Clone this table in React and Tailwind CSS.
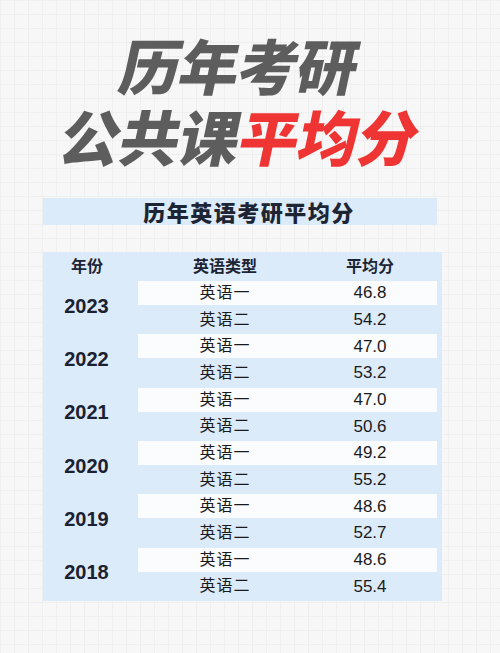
import React from 'react';

const rows = [
    { year: '2023', one: '46.8', two: '54.2' },
    { year: '2022', one: '47.0', two: '53.2' },
    { year: '2021', one: '47.0', two: '50.6' },
    { year: '2020', one: '49.2', two: '55.2' },
    { year: '2019', one: '48.6', two: '52.7' },
    { year: '2018', one: '48.6', two: '55.4' },
];

const cjk = { fontFamily: '"Liberation Sans", "Noto Sans CJK SC", sans-serif' };

const App = () => {
    return (
        <div
            className="w-[500px] h-[653px] overflow-hidden bg-[#f7f7f7] bg-[linear-gradient(#efefef_1px,transparent_1px),linear-gradient(90deg,#efefef_1px,transparent_1px)] bg-[size:14px_14px]"
            style={cjk}
        >
            {/* big title */}
            <div className="pt-[34px] pr-[20px] flex flex-col items-center font-black text-[60px] leading-[60px] text-[#5d5d5d]" style={{ fontFamily: '"Noto Sans CJK SC", sans-serif' }}>
                <div className="-skew-x-12 tracking-[-1px]">历年考研</div>
                <div className="-skew-x-12 tracking-[-0.5px] mt-[11px]">
                    公共课<span className="text-[#ef3434]">平均分</span>
                </div>
            </div>

            <div className="px-[43px]">
                {/* subtitle band */}
                <div className="mt-[33px] w-[394px] h-[27px] bg-[#dcebfa] flex items-center justify-center pl-[18px]">
                    <span className="text-[22px] leading-[27px] font-black tracking-[1.5px] text-[#1d2433]" style={{ fontFamily: '"Noto Sans CJK SC", sans-serif' }}>历年英语考研平均分</span>
                </div>

                {/* table */}
                <div className="mt-[27px] w-[399px] bg-[#dcebfa] text-[#1a1a1a]">
                    <div className="flex h-[29px] items-center font-bold text-[16px] text-[#1d2433]">
                        <div className="w-[88px] text-center">年份</div>
                        <div className="w-[188px] text-center">英语类型</div>
                        <div className="w-[102px] text-center">平均分</div>
                    </div>

                    {rows.map((r) => (
                        <div key={r.year} className="flex h-[53.33px]">
                            <div className="w-[95px] flex items-center justify-center pr-[8px] pb-[4px] font-bold text-[20px] text-[#1b2130]">
                                {r.year}
                            </div>
                            <div className="flex flex-col w-[299px]">
                                <div className="h-[24px] bg-[#fbfcfd] flex items-center text-[16px]">
                                    <div className="w-[174px] text-center tracking-[1px]">英语一</div>
                                    <div className="w-[116px] text-center text-[17px]">{r.one}</div>
                                </div>
                                <div className="flex-1 flex items-center text-[16px]">
                                    <div className="w-[174px] text-center tracking-[1px]">英语二</div>
                                    <div className="w-[116px] text-center text-[17px]">{r.two}</div>
                                </div>
                            </div>
                        </div>
                    ))}
                </div>
            </div>
        </div>
    );
};

export default App;
